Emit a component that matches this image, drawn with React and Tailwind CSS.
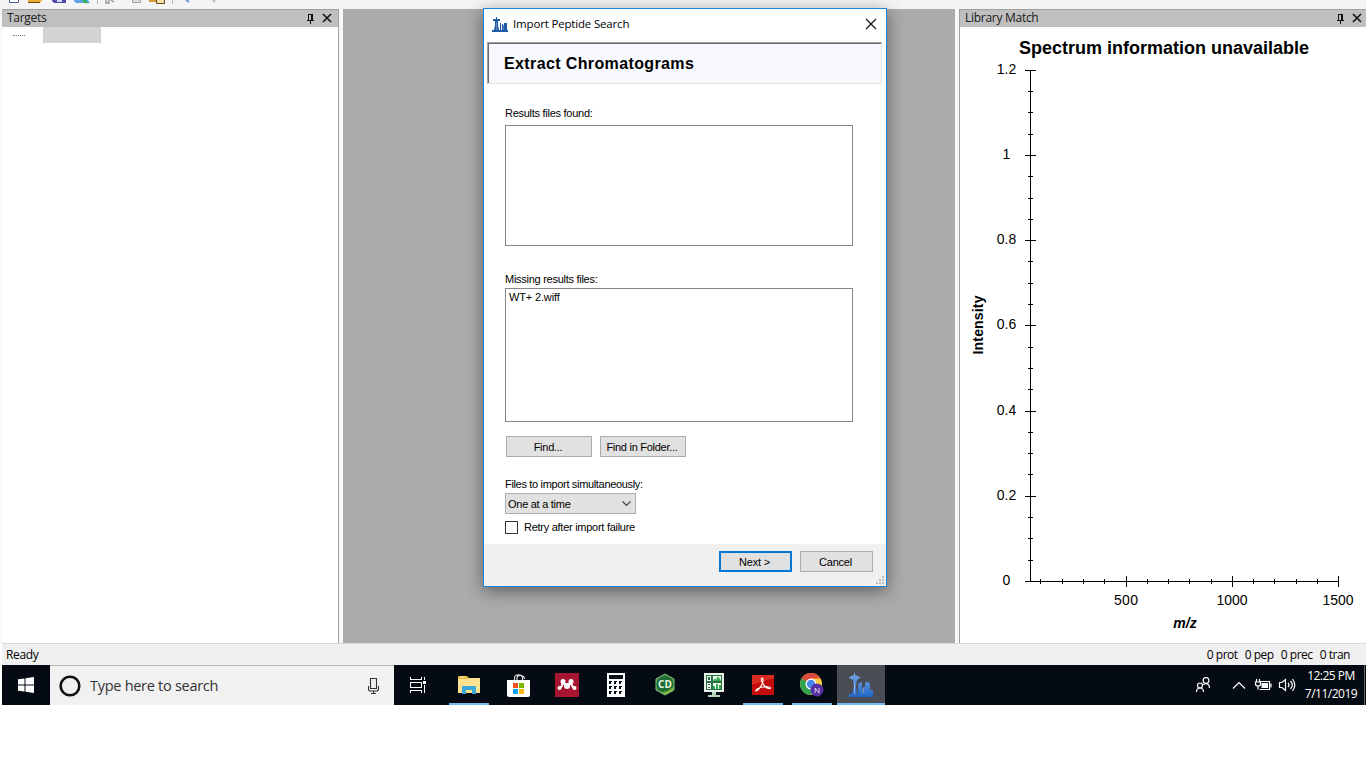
const yMajor = [
  { y: 70, label: "1.2" },
  { y: 155, label: "1" },
  { y: 240, label: "0.8" },
  { y: 325, label: "0.6" },
  { y: 411, label: "0.4" },
  { y: 496, label: "0.2" },
  { y: 581, label: "0" },
];
const yMinor = [91, 112, 134, 176, 198, 219, 261, 283, 304, 347, 368, 389, 432, 453, 474, 517, 538, 560];
const xMajor = [
  { x: 1126, label: "500", width: 24 },
  { x: 1232, label: "1000", width: 31 },
  { x: 1338, label: "1500", width: 31 },
];
const xMinor = [1040, 1062, 1083, 1104, 1147, 1168, 1189, 1211, 1253, 1274, 1296, 1317];

function PinIcon() {
  return (
    <svg width="9" height="11" viewBox="0 0 9 11" fill="none" stroke="#111" shapeRendering="crispEdges">
      <path d="M2.500 7V1.500H6.500V7M1 7.500H8M4.500 8V11M5.500 2V7" />
    </svg>
  );
}

function CloseIcon() {
  return (
    <svg width="10" height="10" viewBox="0 0 10 10" fill="none" stroke="#111" strokeWidth="1.600">
      <path d="M1 1L9 9M9 1L1 9" />
    </svg>
  );
}

function PanelHeader({ title, className }) {
  return (
    <div className={`flex h-[18px] shrink-0 items-center border-t border-[#a0a0a0] bg-[#bfbfbf] pb-px pl-[5px] text-[12px] text-[#1a1a1a] ${className}`}>
      <span className="flex-1 tracking-[-0.28px]">{title}</span>
      <span className="mr-[7px]"><PinIcon /></span>
      <CloseIcon />
    </div>
  );
}

function Toolbar() {
  return (
    <div className="h-[9px] shrink-0 bg-[#f4f4f4]">
      <svg width="345" height="9" viewBox="0 0 345 9" fill="none">
        <path d="M9.500 0V2.500H18.500V0" fill="#fff" stroke="#4a5f96" />
        <path d="M28 0H42L40 3H28Z" fill="#e8ad36" />
        <path d="M28 2.500H40" stroke="#6f4a12" />
        <path d="M52 0H66V3H54L52 1Z" fill="#4c4ba8" />
        <path d="M57 0H62V2H57Z" fill="#d8d8f4" />
        <path d="M74 0H88L90 3H76L74 1Z" fill="#5fa3e8" />
        <path d="M83 0L87 3" stroke="#26ba30" strokeWidth="2" />
        <path d="M97.500 0V4M172.500 0V4" stroke="#b5b5b5" />
        <path d="M106 0V3H109V0M111 0L114 2" stroke="#9b9b9b" strokeWidth="1.500" />
        <path d="M132.500 0V2.500H140.500V0" fill="#ddd" stroke="#a1a1a1" />
        <path d="M149 0H158V2H149Z" fill="#d39a31" />
        <path d="M156.500 0V3.500H164.500V0" fill="#f6dfa2" stroke="#5b4724" />
        <path d="M186 0L189 2" stroke="#6f91e4" strokeWidth="2" />
        <path d="M213 0L215 2" stroke="#b7b7b7" strokeWidth="2" />
      </svg>
    </div>
  );
}

function TargetsPanel() {
  return (
    <section className="flex w-[337px] shrink-0 flex-col border-r border-[#a0a0a0] bg-white">
      <PanelHeader title="Targets" className="pr-[6px]" />
      <div className="flex h-4 pl-[11px]">
        <div className="mt-2 w-3 border-t border-dotted border-[#777]" />
        <div className="ml-[18px] h-4 w-[58px] bg-[#d3d3d3]" />
      </div>
    </section>
  );
}

function LibraryMatchPanel() {
  return (
    <section className="flex w-[407px] shrink-0 flex-col border-l border-[#a0a0a0] bg-white">
      <PanelHeader title="Library Match" className="pr-1" />
      <svg
        width="406"
        height="616"
        viewBox="960 27 406 616"
        className="font-['Liberation_Sans',Arial,sans-serif]"
        fill="#000"
      >
        <text x="1019" y="54" fontSize="18" fontWeight="700" textLength="290">Spectrum information unavailable</text>
        <g stroke="#000" shapeRendering="crispEdges">
          <path d="M1030.500 70V582M1025 581.500H1339" />
          {yMajor.map((t) => (
            <path key={t.y} d={`M1025 ${t.y + 0.5}H1036`} />
          ))}
          {yMinor.map((y) => (
            <path key={y} d={`M1028 ${y + 0.5}H1033`} />
          ))}
          {xMajor.map((t) => (
            <path key={t.x} d={`M${t.x + 0.5} 576V587`} />
          ))}
          {xMinor.map((x) => (
            <path key={x} d={`M${x + 0.5} 579V584`} />
          ))}
        </g>
        <g fontSize="14" textAnchor="middle">
          {yMajor.map((t) => (
            <text key={t.label} x="1006.500" y={t.y + 4}>{t.label}</text>
          ))}
          {xMajor.map((t) => (
            <text key={t.label} x={t.x} y="605" textLength={t.width}>{t.label}</text>
          ))}
        </g>
        <text x="1185" y="628" fontSize="14" fontWeight="700" fontStyle="italic" textAnchor="middle">m/z</text>
        <text transform="translate(983 325) rotate(-90)" fontSize="14" fontWeight="700" textAnchor="middle" textLength="59">Intensity</text>
      </svg>
    </section>
  );
}

function DialogButton({ children, className }) {
  return (
    <button className={`flex h-[21px] items-center justify-center bg-[#e1e1e1] pr-[2px] pt-px ${className}`}>{children}</button>
  );
}

function ImportDialog() {
  return (
    <div className="absolute left-[483px] top-2 flex h-[579px] w-[404px] flex-col border border-[#1883d7] bg-white shadow-[0_4px_16px_rgba(0,0,0,0.45)]">
      <div className="flex h-[33px] shrink-0 items-center pl-2 pr-[9px] pb-[3px]">
        <svg width="16" height="15" viewBox="0 0 16 15" fill="#1f5aa5">
          <path d="M4 0H5V2H8V4H6L6 8L7 13H8V6H9V13H10V7H11V8H12V6H15V13H16V15H0V13H2L3 8V4H1V2H4Z" />
          <path d="M4.500 5V13M11.500 8V13" stroke="#86a9d4" strokeWidth=".6" />
        </svg>
        <span className="ml-[5px] flex-1 text-[11.5px] tracking-[-0.17px]">Import Peptide Search</span>
        <svg width="12" height="12" viewBox="0 0 12 12" stroke="#111" strokeWidth="1.100">
          <path d="M1 1L11 11M11 1L1 11" />
        </svg>
      </div>

      <div className="ml-[3px] h-[42px] w-[395px] shrink-0 border border-b-[#e3e3e3] border-l-[#a0a0a0] border-r-[#e3e3e3] border-t-[#a0a0a0]">
        <div className="flex h-full items-center border-l border-t border-[#696969] bg-[#f8f8ff] pl-[15px] font-['Liberation_Sans',Arial,sans-serif] text-[16px] font-bold tracking-[0.38px]">
          Extract Chromatograms
        </div>
      </div>

      <div className="flex h-[460px] shrink-0 flex-col pl-[21px] pt-[21px] font-['Liberation_Sans',Arial,sans-serif] text-[11px] leading-4 tracking-[-0.27px]">
        <label>Results files found:</label>
        <div className="mt-1 h-[121px] w-[348px] shrink-0 border border-[#828790]" />
        <label className="mt-[25px]">Missing results files:</label>
        <div className="mt-px h-[134px] w-[348px] shrink-0 border border-[#828790] pl-[3px] tracking-[-0.15px]">WT+ 2.wiff</div>
        <div className="ml-px mt-[14px] flex gap-2">
          <DialogButton className="w-[86px] border border-[#adadad]">Find...</DialogButton>
          <DialogButton className="w-[86px] border border-[#adadad]">Find in Folder...</DialogButton>
        </div>
        <label className="mt-[19px] tracking-[-0.33px]">Files to import simultaneously:</label>
        <div className="mt-px flex h-[21px] w-[131px] shrink-0 items-center border border-[#adadad] bg-[#e1e1e1] pl-[2px] pr-1">
          <span className="flex-1">One at a time</span>
          <svg width="9" height="6" viewBox="0 0 9 6" fill="none" stroke="#444" strokeWidth="1.200">
            <path d="M.5 .5L4.500 4.500L8.500 .5" />
          </svg>
        </div>
        <div className="mt-[5px] flex items-center">
          <span className="h-[13px] w-[13px] border border-[#333] bg-white" />
          <span className="ml-[6px]">Retry after import failure</span>
        </div>
      </div>

      <div className="relative flex flex-1 justify-end gap-2 bg-[#f0f0f0] pr-[13px] pt-[7px] font-['Liberation_Sans',Arial,sans-serif] text-[11px] tracking-[-0.2px]">
        <DialogButton className="w-[73px] border-2 border-[#0078d7]">Next &gt;</DialogButton>
        <DialogButton className="w-[73px] border border-[#adadad]">Cancel</DialogButton>
        <svg className="absolute bottom-[2px] right-[2px]" width="8" height="8" fill="#bfbfbf">
          <path d="M6 0H8V2H6ZM3 3H5V5H3ZM6 3H8V5H6ZM0 6H2V8H0ZM3 6H5V8H3ZM6 6H8V8H6Z" />
        </svg>
      </div>
    </div>
  );
}

function TaskItem({ children, open, active }) {
  return (
    <div className={`flex h-10 w-12 shrink-0 flex-col items-center ${active ? "bg-[#4a4e54]" : ""}`}>
      <div className="flex h-[38px] items-center pt-[2px]">{children}</div>
      {open && <div className={`h-0.5 bg-[#76b9ed] ${active ? "w-12" : "w-10"}`} />}
    </div>
  );
}

function Taskbar() {
  return (
    <footer className="ml-0.5 flex h-10 shrink-0 bg-[#050b12] text-white">
      <div className="flex w-12 items-center justify-center">
        <svg width="16" height="16" viewBox="0 0 16 16" fill="#fff">
          <path d="M0 2.300L6.500 1.400V7.500H0ZM7.500 1.200L16 0V7.500H7.500ZM0 8.500H6.500V14.600L0 13.700ZM7.500 8.500H16V16L7.500 14.800Z" />
        </svg>
      </div>
      <div className="flex w-[344px] items-center border-t border-[#bbb] bg-[#f1f1f1] pl-[9px] pr-[15px] text-[14.5px] text-[#333]">
        <svg width="22" height="22" viewBox="0 0 22 22" fill="none">
          <circle cx="11" cy="11" r="9.300" stroke="#111" strokeWidth="2.600" />
        </svg>
        <span className="ml-[9px] flex-1 tracking-[-0.28px]">Type here to search</span>
        <svg width="11" height="16" viewBox="0 0 11 16" fill="none" stroke="#333" strokeWidth="1.100">
          <path d="M2.500 .5H8.500V10.500H2.500ZM.5 8V11Q.5 13 2.500 13H8.500Q10.500 13 10.500 11V8M5.500 13V15.500M3 15.500H8" />
        </svg>
      </div>

      <div className="flex flex-1 gap-px">
        <TaskItem>
          <svg width="17" height="16" viewBox="0 0 17 16" fill="none" stroke="#fff" shapeRendering="crispEdges">
            <path d="M.5 0V2.500H11.500V0M.5 5.500H11.500V10.500H.5ZM.5 16V13.500H11.500V16M14.500 0V3M14.500 8V16" />
            <path d="M13 4H16V7H13Z" fill="#fff" stroke="none" />
          </svg>
        </TaskItem>
        <div className="w-px" />
        <TaskItem open>
          <svg width="22" height="18" viewBox="0 0 22 18">
            <path d="M0 1Q0 0 1 0H9L11 2H21V17H0Z" fill="#e9b83c" />
            <path d="M0 3H10L11 2H22V17H0Z" fill="#fde391" />
            <path d="M2 1H7" stroke="#fff2bd" />
            <path d="M4 18V11Q4 10 5 10H17Q18 10 18 11V18H14V14H8V18Z" fill="#39a9dc" />
          </svg>
        </TaskItem>
        <TaskItem>
          <svg width="23" height="23" viewBox="0 0 23 23">
            <path d="M7.500 7V4Q7.500 .8 11.500 .8T15.500 4V7M10 6V4Q10 1.500 13 1.500Q17.500 1.500 17.500 5" fill="none" stroke="#ddd" strokeWidth="1.200" />
            <path d="M0 6H23V21Q23 23 21 23H2Q0 23 0 21Z" fill="#fff" />
            <path d="M6 9H11V14H6Z" fill="#f25022" />
            <path d="M12 9H17V14H12Z" fill="#7fba00" />
            <path d="M6 15H11V20H6Z" fill="#00a4ef" />
            <path d="M12 15H17V20H12Z" fill="#ffb900" />
          </svg>
        </TaskItem>
        <TaskItem>
          <svg width="24" height="24" viewBox="0 0 24 24">
            <path d="M0 0H24V24H0Z" fill="#a81530" />
            <path d="M4.500 15Q7.500 14 7.500 9Q12 14 16.500 9Q16.500 14 19.500 15" fill="none" stroke="#fff" strokeWidth="2" />
            <g fill="#fff">
              <circle cx="8" cy="8.500" r="2.500" /><circle cx="16" cy="8.500" r="2.500" />
              <circle cx="4.500" cy="15" r="2" /><circle cx="12" cy="13" r="3" /><circle cx="19.500" cy="15" r="2" />
            </g>
          </svg>
        </TaskItem>
        <TaskItem>
          <svg width="18" height="24" viewBox="0 0 18 24" shapeRendering="crispEdges">
            <path d="M0 0H18V24H0Z" fill="#fff" />
            <path d="M2 2H16V6H2ZM2 8H5V9H4V11H2ZM7 8H10V9H9V11H7ZM12 8H15V9H14V11H12ZM2 13H5V14H4V16H2ZM7 13H10V14H9V16H7ZM12 13H15V14H14V16H12ZM2 18H5V19H4V21H2ZM7 18H10V19H9V21H7ZM12 18H15V19H14V21H12Z" fill="#07101a" />
          </svg>
        </TaskItem>
        <TaskItem>
          <svg width="22" height="24" viewBox="0 0 22 24">
            <path d="M11 1L20 6V17L11 22L2 17V6Z" fill="#3b8b3f" stroke="#8bbf8b" />
            <circle cx="11" cy="11.500" r="8.500" fill="#216d31" />
            <path d="M4 17Q11 22 19 14L19 18L11 22Z" fill="#77b843" />
            <text x="11" y="15" textAnchor="middle" fontSize="10" fontWeight="700" textLength="14" fill="#e8f5e8">CD</text>
          </svg>
        </TaskItem>
        <TaskItem>
          <svg width="20" height="24" viewBox="0 0 20 24">
            <path d="M0 0H20V19H0Z" fill="#e8f2e8" />
            <path d="M2 2H18V17H2Z" fill="#286f43" />
            <path d="M3 3H7V8H3ZM3 10H7V16H3ZM9 3H17V8H9ZM9 10H17V16H9Z" fill="#f1f8ef" />
            <path d="M9 8L11 5L12 7L14 3L17 8ZM9 16V13H11V16M12 16V11H14V16M15 16V12H17V16" fill="#33a94e" />
            <path d="M4 4H6V7H4ZM4 11H6V12H4ZM4 14H6V15H4Z" fill="#286f43" />
            <path d="M8 19H12V22H16V24H4V22H8Z" fill="#b6d5b8" />
          </svg>
        </TaskItem>
        <TaskItem open>
          <svg width="22" height="20" viewBox="0 0 22 20">
            <path d="M0 0H22V20H0Z" fill="#c40c0c" />
            <path d="M0 10L22 3V0H0Z" fill="#d92a20" />
            <path d="M4 16C7 15 12 8 11 4C10 1.500 8.500 4 10 7C12 11 15 14 18 13.500C20 12.500 15 11 11 12C7 12.500 3 15 4 16Z" fill="none" stroke="#fff" strokeWidth="1.100" />
          </svg>
        </TaskItem>
        <TaskItem open>
          <svg width="24" height="24" viewBox="0 0 24 24">
            <circle cx="11" cy="11" r="11" fill="#f9cb37" />
            <path d="M11 11L1.500 5.500A11 11 0 0 1 20.500 5.500H11Z" fill="#dd4b3e" />
            <path d="M1.500 5.500A11 11 0 0 0 11 22L15 14L11 11Z" fill="#31a350" />
            <circle cx="11" cy="11" r="5.500" fill="#fff" />
            <circle cx="11" cy="11" r="4.200" fill="#4788ed" />
            <circle cx="17" cy="17" r="6.500" fill="#5630a5" />
            <text x="17" y="20" textAnchor="middle" fontSize="8" fill="#fff">N</text>
          </svg>
        </TaskItem>
        <TaskItem open active>
          <svg width="24" height="24" viewBox="0 0 24 24">
            <defs>
              <linearGradient id="tower" x2="0" y2="1">
                <stop stopColor="#78a7e5" />
                <stop offset="1" stopColor="#2065c7" />
              </linearGradient>
            </defs>
            <path d="M5 0H6V2L11 4V5L8 7L7 13L8 21H9V11L12 9L13 10V19H14V14H16V10L17 9H20V10L21 11V17H24V24H0V21H3L5 13L4 7L0 5V4L5 2Z" fill="url(#tower)" />
            <path d="M5.500 10V21M14 15V20" stroke="#b0ccef" strokeWidth=".7" />
          </svg>
        </TaskItem>
      </div>

      <div className="flex items-center">
        <svg width="102" height="40" viewBox="1194 665 102 40" fill="none" stroke="#fff" strokeWidth="1.200">
          <circle cx="1206" cy="680.500" r="2.900" />
          <circle cx="1200" cy="685.500" r="2.500" />
          <path d="M1196.500 692Q1196.500 688 1200 688T1203.500 692M1203 684.500Q1209.500 682 1209.500 688" />
          <path d="M1233 688.500L1239 682.500L1245 688.500" />
          <path d="M1260 681.500H1269.500V689.500H1259.500M1271 683.500V687.500M1256.500 679V681.500M1259.500 679V681.500M1255.500 682H1260.500V684Q1260.500 686 1258 686T1255.500 684ZM1258 686V689.500" />
          <path d="M1261.500 683H1268V688H1261.500Z" fill="#fff" stroke="none" />
          <path d="M1279.500 682.500H1282L1285.500 679.500V690.500L1282 687.500H1279.500ZM1288 683Q1290 685 1288 687M1290.500 681Q1294 685 1290.500 689M1292.500 679Q1297 685 1292.500 691" />
        </svg>
      </div>
      <div className="flex w-[69px] flex-col justify-center border-r border-[#666] pl-[2px] text-center text-[12px] leading-[18px] tracking-[-0.5px]">
        <span className="whitespace-nowrap">12:25 PM</span>
        <span className="whitespace-nowrap">7/11/2019</span>
      </div>
      <div className="w-px" />
    </footer>
  );
}

export default function App() {
  return (
    <div className="relative flex h-[768px] w-[1366px] flex-col overflow-hidden bg-white font-['Open_Sans','Noto_Sans',sans-serif] text-black">
      <Toolbar />
      <main className="flex h-[634px] shrink-0 bg-[#f8f8f8] pl-0.5">
        <TargetsPanel />
        <div className="w-1" />
        <div className="w-[612px] bg-[#ababab]" />
        <div className="w-1" />
        <LibraryMatchPanel />
      </main>
      <div className="ml-0.5 flex h-[22px] shrink-0 items-center border-t border-[#d7d7d7] bg-[#f0f0f0] pl-1 pr-4 text-[12px]">
        <span className="flex-1 tracking-[-0.35px]">Ready</span>
        <div className="flex gap-[7px] tracking-[-0.47px]">
          <span>0 prot</span>
          <span>0 pep</span>
          <span>0 prec</span>
          <span>0 tran</span>
        </div>
      </div>
      <Taskbar />
      <ImportDialog />
    </div>
  );
}
